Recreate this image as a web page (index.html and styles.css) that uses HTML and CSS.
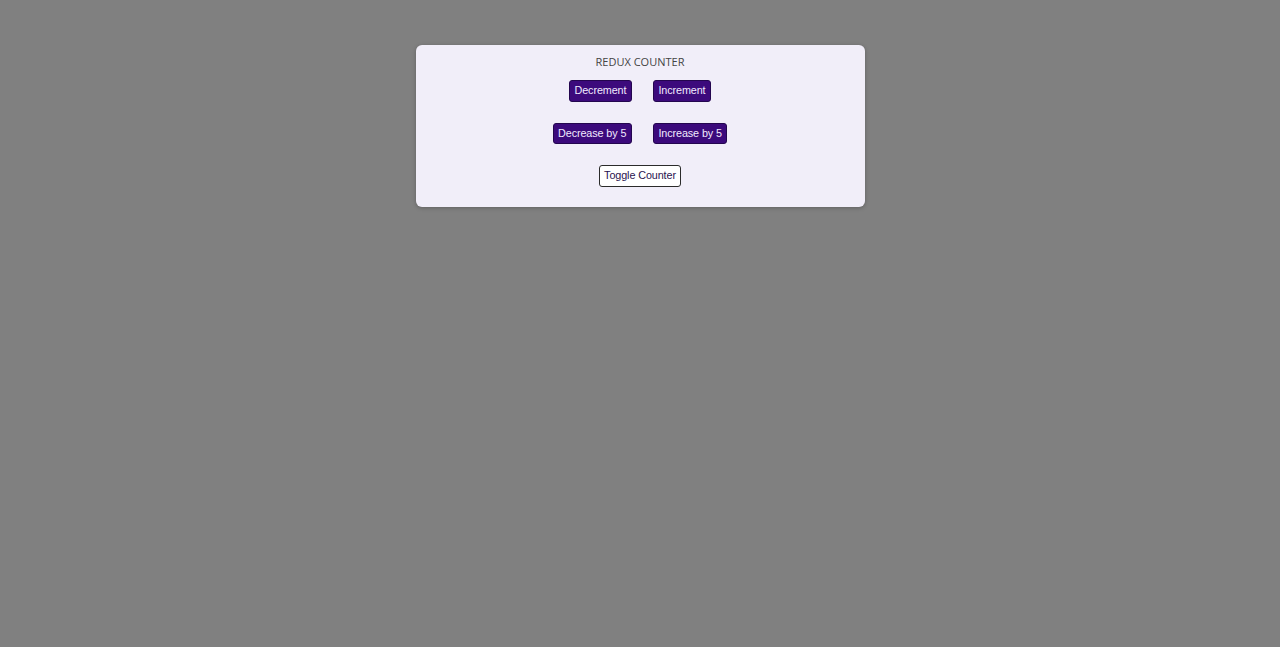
FILE: index.html
```html
<!DOCTYPE html>
<html lang="en">
<head>
<meta charset="utf-8">
<title>Redux Counter</title>
<link rel="stylesheet" href="styles.css">
</head>
<body>
<main class="card">
  <h1 class="title">REDUX COUNTER</h1>
  <div class="row">
    <button class="btn">Decrement</button>
    <button class="btn">Increment</button>
  </div>
  <div class="row">
    <button class="btn">Decrease by 5</button>
    <button class="btn">Increase by 5</button>
  </div>
  <div class="row">
    <button class="btn btn-outline">Toggle Counter</button>
  </div>
</main>
</body>
</html>
```
FILE: styles.css
```css
html, body {
  margin: 0;
  padding: 0;
}
body {
  background: #808080;
  min-height: 100vh;
  font-family: "Open Sans", sans-serif;
}
.card {
  width: 449px;
  margin: 45px auto 0;
  background: #f1eef9;
  border-radius: 6px;
  box-shadow: 0 1px 4px rgba(0, 0, 0, 0.25);
  padding: 10px 0 20.5px;
  box-sizing: border-box;
  display: flex;
  flex-direction: column;
  align-items: center;
  gap: 21px;
}
.title {
  margin: 0 0 -10px;
  font-size: 11px;
  line-height: 14px;
  font-weight: 500;
  color: #444444;
}
.row {
  display: flex;
  justify-content: center;
  gap: 21px;
}
.btn {
  font-family: "Liberation Sans", Arial, sans-serif;
  font-size: 10.8px;
  line-height: 13.5px;
  letter-spacing: -0.1px;
  padding: 3px 4.5px;
  border: 1px solid #24064f;
  border-radius: 3px;
  background: #3c0a7c;
  color: #f1e9ff;
  cursor: pointer;
}
.btn-outline {
  background: #ffffff;
  color: #2a1450;
  border-color: #2b2b2b;
}
```
